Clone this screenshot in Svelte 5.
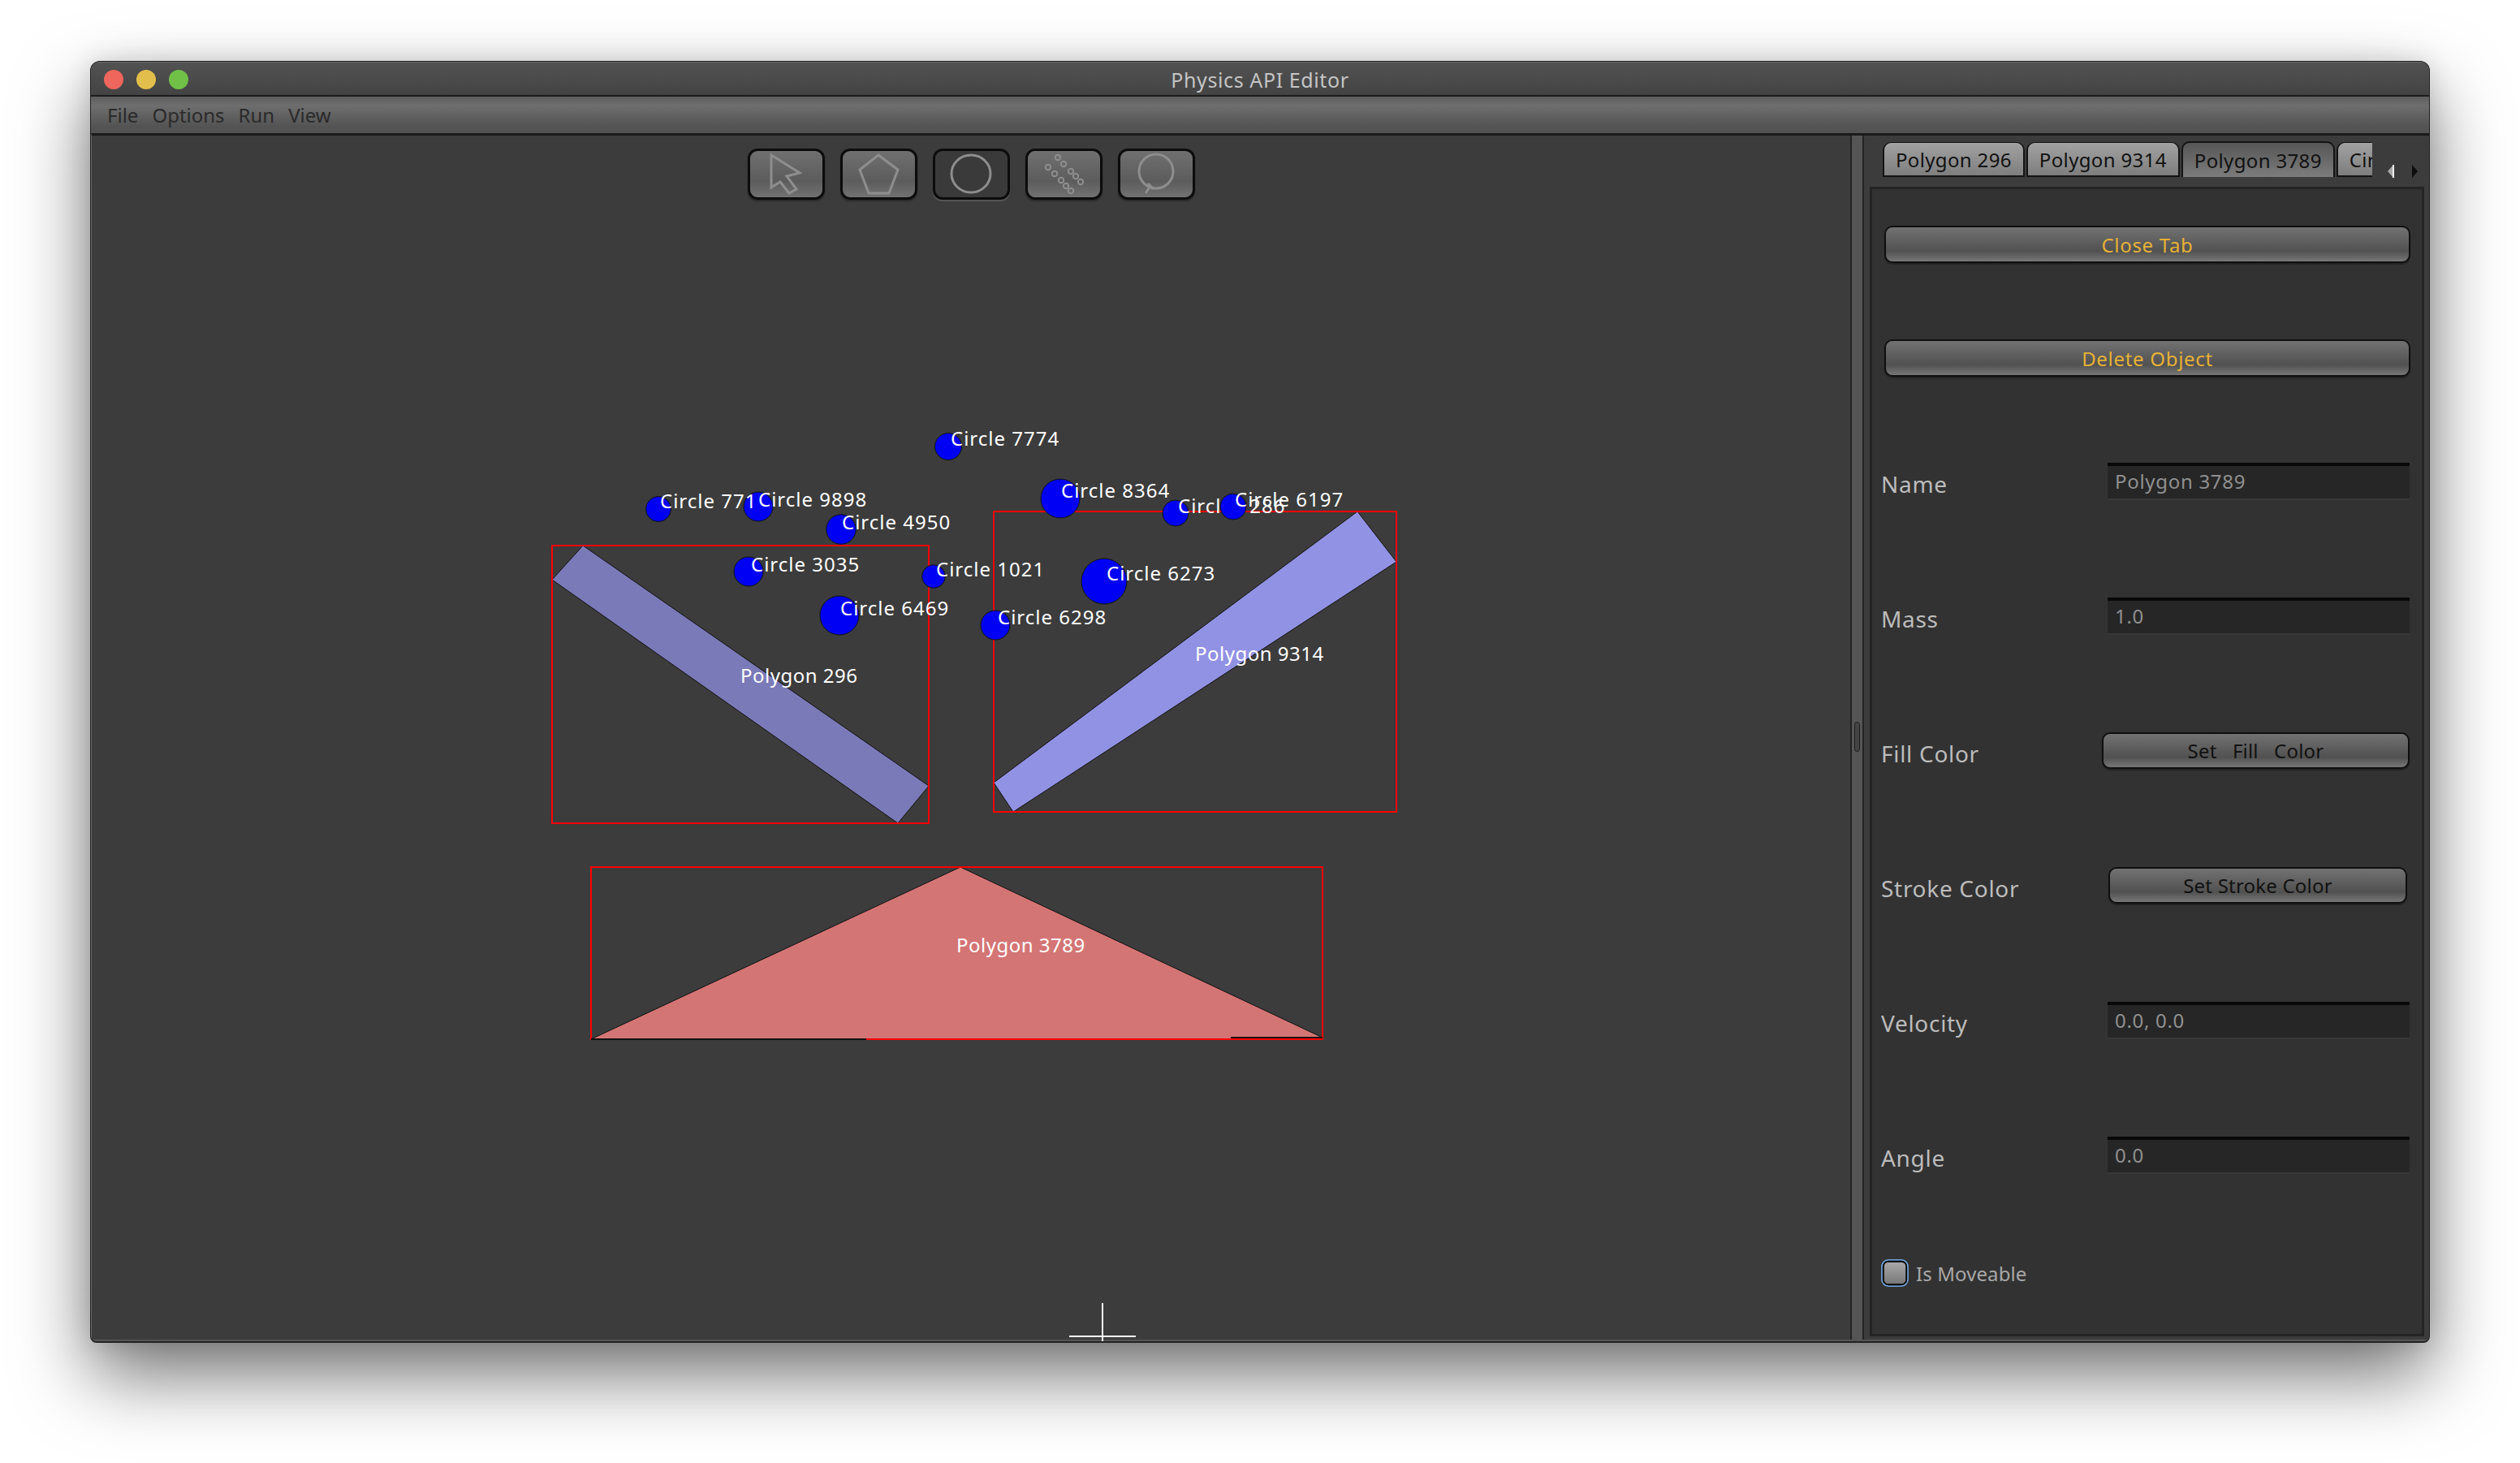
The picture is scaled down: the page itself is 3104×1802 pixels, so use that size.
<script lang="ts">
  // Physics API Editor window: canvas on the left, object inspector on the right.
  const menus = ['File', 'Options', 'Run', 'View'];
  const tabs = ['Polygon 296', 'Polygon 9314', 'Polygon 3789', 'Circle 771'];

  const polygons = [
    { name: 'Polygon 296', fill: '#7b7ab8', points: '718,672 1144,968 1106,1014 680,714', box: [680, 672, 464, 342], lx: 912, ly: 841 },
    { name: 'Polygon 9314', fill: '#9292e4', points: '1672,630 1720,692 1248,1000 1224,964', box: [1224, 630, 496, 370], lx: 1472, ly: 814 },
    { name: 'Polygon 3789', fill: '#d47575', points: '1183,1068 1629,1278 1629,1280 728,1280', box: [728, 1068, 901, 212], lx: 1178, ly: 1173 },
  ];

  // drawn in this order, later circles sit on top of earlier labels
  const circles = [
    { name: 'Circle 7774', cx: 1168, cy: 550, r: 16.5, lx: 1171, ly: 549 },
    { name: 'Circle 9898', cx: 934, cy: 624, r: 18, lx: 934, ly: 624 },
    { name: 'Circle 771', cx: 811, cy: 627, r: 15.5, lx: 813, ly: 626 },
    { name: 'Circle 4950', cx: 1036, cy: 652, r: 18.3, lx: 1037, ly: 652 },
    { name: 'Circle 3035', cx: 922, cy: 704, r: 18, lx: 925, ly: 704 },
    { name: 'Circle 1021', cx: 1150, cy: 710, r: 14.3, lx: 1153, ly: 710 },
    { name: 'Circle 6469', cx: 1034, cy: 758, r: 24, lx: 1035, ly: 758 },
    { name: 'Circle 8364', cx: 1306, cy: 614, r: 24, lx: 1307, ly: 613 },
    { name: 'Circle 286', cx: 1448, cy: 632, r: 16, lx: 1451, ly: 632, gap: 13 },
    { name: 'Circle 6197', cx: 1519, cy: 624, r: 16, lx: 1521, ly: 624 },
    { name: 'Circle 6273', cx: 1360, cy: 716, r: 28, lx: 1363, ly: 715 },
    { name: 'Circle 6298', cx: 1226, cy: 770, r: 18, lx: 1229, ly: 769 },
  ];

  const links = [
    [40, 11], [47, 19], [56, 28], [62, 34], [68, 41],
    [28, 23], [36, 31], [44, 39], [50, 46], [56, 52],
  ];
</script>

<div class="page">
  <div class="window">
    <div class="titlebar">
      <div class="lights">
        <span class="light red"></span>
        <span class="light yellow"></span>
        <span class="light green"></span>
      </div>
      <span class="title">Physics API Editor</span>
    </div>
    <div class="menubar">
      {#each menus as menu}
        <span>{menu}</span>
      {/each}
    </div>

    <div class="content">
      <div class="canvas">
        <svg class="scene" viewBox="113 167 2166 1485" width="2166" height="1485">
          {#each polygons as p}
            <polygon points={p.points} fill={p.fill} stroke="#111" stroke-width="1" />
            <rect x={p.box[0]} y={p.box[1]} width={p.box[2]} height={p.box[3]} fill="none" stroke="#f00" stroke-width="2" />
          {/each}
          <line x1="728" y1="1280" x2="1067" y2="1280" stroke="#111" stroke-width="2" />
          <line x1="1516" y1="1278" x2="1629" y2="1278" stroke="#111" stroke-width="2" />
          {#each polygons as p}
            <text class="poly" x={p.lx} y={p.ly}>{p.name}</text>
          {/each}
          {#each circles as c}
            <circle cx={c.cx} cy={c.cy} r={c.r} fill="#0000f5" stroke="#111" stroke-width="1" />
            <text x={c.lx} y={c.ly} word-spacing={c.gap ?? 0}>{c.name}</text>
          {/each}
          <line x1="1358" y1="1605" x2="1358" y2="1652" stroke="#fff" stroke-width="2" />
          <line x1="1317" y1="1646" x2="1399" y2="1646" stroke="#fff" stroke-width="2" />
        </svg>

        <div class="toolbar">
          <button class="tool" aria-label="Select">
            <svg viewBox="0 0 95 63"><path d="M29 8 L64 30 L48 34 L60 50 L51 55 L40 41 L29 48 Z" /></svg>
          </button>
          <button class="tool" aria-label="Polygon">
            <svg viewBox="0 0 95 63"><path d="M47 8 L71 26 L60 55 L35 55 L24 26 Z" /></svg>
          </button>
          <button class="tool selected" aria-label="Circle">
            <svg viewBox="0 0 95 63"><ellipse cx="47" cy="31" rx="24" ry="23" /></svg>
          </button>
          <button class="tool" aria-label="Chain">
            <svg viewBox="0 0 95 63" class="thin">
              {#each links as l}
                <circle cx={l[0]} cy={l[1]} r="3.2" />
              {/each}
            </svg>
          </button>
          <button class="tool" aria-label="Rope">
            <svg viewBox="0 0 95 63">
              <ellipse cx="47" cy="28" rx="21" ry="21" />
              <path d="M40 46 L34 55 M37 43 L44 50" />
            </svg>
          </button>
        </div>
      </div>

      <div class="splitter"><span class="grip"></span></div>

      <div class="panel">
        <div class="tabstrip">
          <div class="tabs">
            {#each tabs as tab, i}
              <div class="tab" class:active={i === 2}>{tab}</div>
            {/each}
          </div>
          <svg class="scroll" width="44" height="20" viewBox="0 0 44 20">
            <path d="M0 10 L7 2 L7 18 Z" fill="#a8a8a8" />
            <rect x="6" y="2" width="2" height="16" fill="#eee" />
            <path d="M30 2 L37 10 L30 18 Z" fill="#0c0c0c" />
          </svg>
        </div>

        <div class="tabbody">
          <button class="btn wide gold">Close Tab</button>
          <button class="btn wide gold delete">Delete Object</button>

          <div class="form">
            <div class="row">
              <span class="label">Name</span>
              <div class="field">Polygon 3789</div>
            </div>
            <div class="row">
              <span class="label">Mass</span>
              <div class="field">1.0</div>
            </div>
            <div class="row">
              <span class="label">Fill Color</span>
              <button class="btn fill">Set   Fill   Color</button>
            </div>
            <div class="row">
              <span class="label">Stroke Color</span>
              <button class="btn stroke">Set Stroke Color</button>
            </div>
            <div class="row">
              <span class="label">Velocity</span>
              <div class="field">0.0, 0.0</div>
            </div>
            <div class="row">
              <span class="label">Angle</span>
              <div class="field">0.0</div>
            </div>
          </div>

          <div class="check">
            <span class="box"></span>
            <span>Is Moveable</span>
          </div>
        </div>
      </div>
    </div>
  </div>
</div>

<style>
  :global(body) { margin: 0; background: #fff; }

  .page {
    width: 3104px;
    height: 1802px;
    padding: 75px 0 0 111px;
    box-sizing: border-box;
    font-family: "Noto Sans", sans-serif;
    overflow: hidden;
  }

  .window {
    width: 2882px;
    height: 1579px;
    box-sizing: border-box;
    display: flex;
    flex-direction: column;
    background: #3c3c3c;
    border: 1px solid #222;
    border-bottom-width: 2px;
    border-radius: 12px 12px 8px 8px;
    box-shadow: 0 40px 90px rgba(0, 0, 0, 0.55), 0 0 30px rgba(0, 0, 0, 0.12);
    overflow: hidden;
  }

  .titlebar {
    height: 43px;
    flex: none;
    position: relative;
    display: flex;
    align-items: center;
    justify-content: center;
    background: linear-gradient(#525252, #434343);
    border-bottom: 2px solid #1c1c1c;
    border-top: 1px solid #6a6a6a;
    box-sizing: border-box;
  }
  .lights { position: absolute; left: 16px; top: 9px; display: flex; gap: 16px; }
  .light { width: 24px; height: 24px; border-radius: 50%; }
  .red { background: #ee665c; }
  .yellow { background: #e2bf4c; }
  .green { background: #70c048; }
  .title { color: #c4c4c4; font-size: 25px; letter-spacing: 0.6px; padding-top: 1px; }

  .menubar {
    height: 45px;
    flex: none;
    box-sizing: border-box;
    display: flex;
    align-items: center;
    gap: 17px;
    padding-left: 20px;
    color: #2a2a2a;
    font-size: 24px;
    background: linear-gradient(#5d5d5d, #6e6e6e 25%, #545454 80%, #525252);
  }

  .content {
    flex: 1;
    min-height: 0;
    display: flex;
    border-top: 3px solid #1a1a1a;
    border-bottom: 2px solid #555;
    border-left: 1px solid #666;
  }

  .canvas { width: 2166px; flex: none; position: relative; background: #3c3c3c; }
  .scene { position: absolute; left: 0; top: 0; }
  .scene text { font-size: 24px; letter-spacing: 1px; fill: #fff; }
  .scene text.poly { letter-spacing: 0.5px; }

  .toolbar {
    position: relative;
    padding-top: 16px;
    display: flex;
    justify-content: center;
    gap: 19px;
  }
  .tool {
    width: 95px;
    height: 63px;
    padding: 0;
    box-sizing: border-box;
    border: 3px solid #0c0c0c;
    border-radius: 12px;
    background: linear-gradient(#707070, #5c5c5c 65%, #727272);
    box-shadow: 0 2px 2px rgba(0, 0, 0, 0.3);
    overflow: hidden;
    display: block;
  }
  .tool svg { display: block; width: 95px; height: 63px; margin: -3px; fill: none; stroke: #8e8e8e; stroke-width: 3; }
  .tool svg.thin { stroke-width: 2; }
  .tool.selected { background: #3a3a3a; box-shadow: 0 2px 0 #565656; }

  .splitter {
    width: 17px;
    flex: none;
    box-sizing: border-box;
    background: #555;
    border-left: 2px solid #232323;
    border-right: 2px solid #232323;
    display: flex;
    align-items: center;
    justify-content: center;
  }
  .grip {
    width: 7px;
    height: 37px;
    box-sizing: border-box;
    background: #444;
    border: 1px solid #1e1e1e;
    border-radius: 4px;
    margin-top: -2px;
  }

  .panel {
    flex: 1;
    display: flex;
    flex-direction: column;
    padding: 0 6px 4px 7px;
    background: #3c3c3c;
    min-width: 0;
  }

  .tabstrip {
    height: 51px;
    flex: none;
    display: flex;
    align-items: flex-end;
    padding-left: 16px;
  }
  .tabs { width: 603px; display: flex; gap: 2px; overflow: hidden; align-self: stretch; }
  .tab {
    flex: none;
    height: 43px;
    box-sizing: border-box;
    margin-top: 8px;
    padding: 0 14px;
    display: flex;
    align-items: center;
    color: #111;
    font-size: 24px;
    letter-spacing: 0.35px;
    white-space: nowrap;
    background: linear-gradient(#a2a2a2, #7e7e7e);
    border: 2px solid #141414;
    border-top-width: 1px;
    border-radius: 10px 10px 0 0;
  }
  .tab.active {
    background: linear-gradient(#565656, #7c7c7c);
    border-top-width: 2px;
    border-bottom: 0;
    margin-top: 7px;
    height: 44px;
  }
  .scroll { margin: 0 0 -3px 19px; flex: none; }

  .tabbody {
    flex: 1;
    margin-top: 12px;
    box-sizing: border-box;
    border: 3px solid #242424;
    background: #323232;
    padding: 45px 15px 0 11px;
    display: flex;
    flex-direction: column;
    min-height: 0;
  }

  .btn {
    height: 46px;
    box-sizing: border-box;
    padding: 0;
    border: 2px solid #0f0f0f;
    border-radius: 10px;
    background: linear-gradient(#727272, #515151 70%, #777);
    font-family: inherit;
    font-size: 24px;
    letter-spacing: 0.2px;
    color: #111;
    white-space: pre;
    box-shadow: 0 2px 1px rgba(0, 0, 0, 0.3);
  }
  .wide { margin-left: 4px; width: 648px; flex: none; }
  .gold { color: #e6b235; letter-spacing: 0.7px; }
  .delete { margin-top: 94px; }

  .form {
    margin-top: 106px;
    display: grid;
    grid-auto-rows: 44px;
    row-gap: 122px;
  }
  .row { display: flex; justify-content: space-between; align-items: flex-start; }
  .label { color: #bcbcbc; font-size: 28px; line-height: 44px; margin-top: 4px; letter-spacing: 0.7px; }
  .field {
    width: 372px;
    height: 44px;
    box-sizing: border-box;
    border-top: 4px solid #080808;
    background: #262626;
    padding-left: 9px;
    color: #909090;
    font-size: 24px;
    letter-spacing: 0.7px;
    line-height: 38px;
    box-shadow: 0 2px 0 #383838;
  }
  .btn.fill { width: 379px; height: 45px; }
  .btn.stroke { width: 368px; height: 45px; margin-right: 3px; }

  .check {
    margin-top: 107px;
    display: flex;
    align-items: center;
    gap: 9px;
    color: #a8a8a8;
    font-size: 24px;
    letter-spacing: 0.1px;
  }
  .box {
    width: 34px;
    height: 34px;
    box-sizing: border-box;
    border: 2px solid #0c0c0c;
    border-radius: 8px;
    background: linear-gradient(#a8a8a8, #787878);
    box-shadow: 0 0 0 2px #6fa5dc;
    transform: scale(0.89);
  }
</style>
